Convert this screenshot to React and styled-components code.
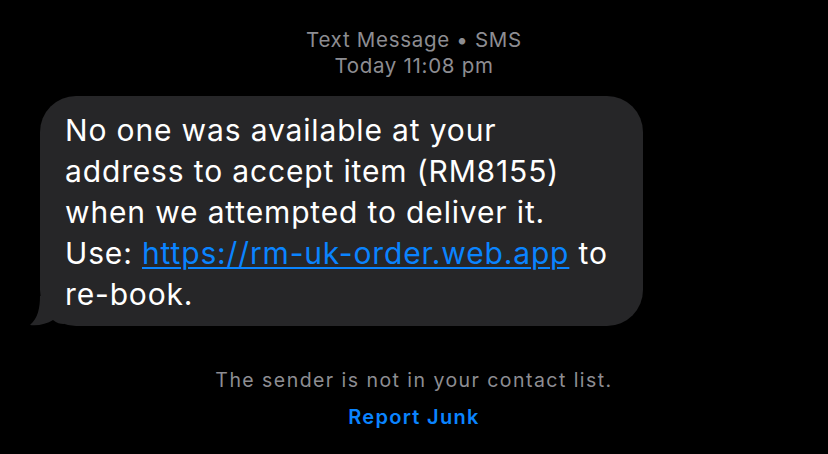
import React from "react";
import styled, { createGlobalStyle } from "styled-components";

const GlobalStyle = createGlobalStyle`
  html, body {
    margin: 0;
    padding: 0;
    background: #000;
  }
  body {
    font-family: Inter, "Noto Sans", sans-serif;
    -webkit-font-smoothing: antialiased;
  }
`;

const Screen = styled.div`
  width: 828px;
  height: 454px;
  background: #000;
  display: flex;
  flex-direction: column;
  box-sizing: border-box;
  padding-top: 27px;
  overflow: hidden;
`;

const Meta = styled.div`
  display: flex;
  flex-direction: column;
  align-items: center;
  color: #8d8d92;
  font-size: 20.5px;
  line-height: 26px;
  letter-spacing: 0.7px;
`;

const BubbleRow = styled.div`
  display: flex;
  padding-left: 40px;
  margin-top: 17px;
`;

const Bubble = styled.div`
  position: relative;
  width: 603px;
  height: 230px;
  box-sizing: border-box;
  background: #262628;
  border-radius: 36px;
  padding: 14px 12px 0 25px;
  color: #fff;
  font-size: 30px;
  line-height: 41px;
  letter-spacing: 0.85px;
`;

const Tail = styled.svg`
  position: absolute;
  left: -10px;
  bottom: 0;
`;

const Link = styled.a`
  color: #0a84ff;
  text-decoration: underline;
  text-decoration-thickness: 1.5px;
  text-underline-offset: 3px;
`;

const Notice = styled.div`
  display: flex;
  flex-direction: column;
  align-items: center;
  margin-top: 41px;
`;

const NoticeText = styled.div`
  color: #8d8d92;
  font-size: 19.5px;
  line-height: 26px;
  letter-spacing: 1.45px;
`;

const ReportButton = styled.div`
  color: #0a84ff;
  font-size: 20px;
  font-weight: 600;
  line-height: 26px;
  letter-spacing: 1.3px;
  margin-top: 11px;
  cursor: pointer;
`;

export default function App() {
  return (
    <>
      <GlobalStyle />
      <Screen>
        <Meta>
          <span>Text Message • SMS</span>
          <span>Today 11:08 pm</span>
        </Meta>
        <BubbleRow>
          <Bubble>
            <Tail width="34" height="30" viewBox="0 0 34 30">
              <path
                d="M10 0 C10 12 8 22 0 29 C8 30 17 28 23 24 C27 27 30 28 34 28 L34 0 Z"
                fill="#262628"
              />
            </Tail>
            No one was available at your
            <br />
            address to accept item (RM8155)
            <br />
            when we attempted to deliver it.
            <br />
            Use: <Link>https://rm-uk-order.web.app</Link> to
            <br />
            re-book.
          </Bubble>
        </BubbleRow>
        <Notice>
          <NoticeText>The sender is not in your contact list.</NoticeText>
          <ReportButton>Report Junk</ReportButton>
        </Notice>
      </Screen>
    </>
  );
}
